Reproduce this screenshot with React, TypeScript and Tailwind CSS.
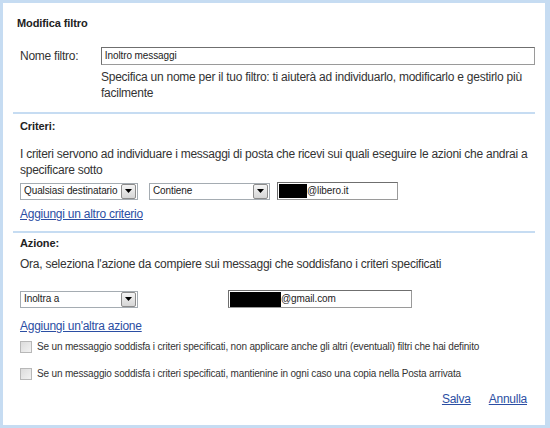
import React from "react";

function Select({ label, width }: { label: string; width: string }) {
  return (
    <div className={`${width} h-[17px] flex items-center border border-[#a5acb2] bg-white`}>
      <span className="flex-1 pl-[3px] text-[10px] tracking-[-0.1px] text-[#222] leading-none whitespace-nowrap overflow-hidden">{label}</span>
      <div className="w-[15px] h-[15px] mr-px border border-[#8c8c8c] rounded-[2px] bg-gradient-to-b from-[#f4f4f4] to-[#d6d6d6] flex items-center justify-center">
        <svg width="7" height="4" viewBox="0 0 7 4">
          <path d="M0 0h7L3.5 4z" fill="#000" />
        </svg>
      </div>
    </div>
  );
}

function TextBox({ width, children }: { width: string; children: React.ReactNode }) {
  return (
    <div
      className={`${width} h-[18px] flex items-center border border-[#9a9a9a] border-t-[#6f6f6f] border-l-[#6f6f6f] bg-white text-[10px] tracking-[-0.1px] text-[#222] leading-none`}
    >
      {children}
    </div>
  );
}

function Check({ label }: { label: string }) {
  return (
    <div className="flex items-center h-[16px]">
      <div className="w-[12px] h-[12px] border border-[#b8b8b8] bg-gradient-to-br from-[#dcdcdc] to-[#f2f2f2]" />
      <span className="ml-[5px] text-[10px] tracking-[-0.17px] text-[#333] whitespace-nowrap">{label}</span>
    </div>
  );
}

export default function App() {
  return (
    <div className="w-[550px] h-[428px] bg-[#c6dcf2] pl-[3px] pr-[5px] py-[3px] font-['Liberation_Sans',Arial,sans-serif]">
      <div className="h-full bg-white px-[10px] pt-[12px] text-[#333] text-[12px] tracking-[-0.25px] leading-[16px]">
        <h1 className="pl-[4px] text-[11px] font-bold text-[#222] tracking-[-0.1px] leading-[16px]">Modifica filtro</h1>

        <div className="pl-[7px]">
          <div className="mt-[16px] flex items-center">
            <span className="w-[81px]">Nome filtro:</span>
            <TextBox width="w-[435px]">
              <span className="pl-[3px]">Inoltro messaggi</span>
            </TextBox>
          </div>
          <p className="mt-[4px] pl-[81px] pr-[8px]">
            Specifica un nome per il tuo filtro: ti aiuterà ad individuarlo, modificarlo e gestirlo più facilmente
          </p>
        </div>

        <div className="mt-[11px] h-[2px] bg-[#c6dcf2]" />

        <div className="pl-[7px]">
          <h2 className="mt-[4px] text-[11px] font-bold text-[#222] tracking-[-0.1px]">Criteri:</h2>
          <p className="mt-[12px] pr-[6px]">
            I criteri servono ad individuare i messaggi di posta che ricevi sui quali eseguire le azioni che andrai a specificare sotto
          </p>
          <div className="mt-[4px] flex items-center">
            <Select label="Qualsiasi destinatario" width="w-[118px]" />
            <div className="ml-[11px]">
              <Select label="Contiene" width="w-[121px]" />
            </div>
            <div className="ml-[7px]">
              <TextBox width="w-[121px]">
                <span className="ml-px w-[28px] h-[14px] bg-black" />
                <span>@libero.it</span>
              </TextBox>
            </div>
          </div>
          <a href="#" className="mt-[6px] inline-block text-[#2b4ea3] underline">
            Aggiungi un altro criterio
          </a>
        </div>

        <div className="mt-[9px] h-[2px] bg-[#c6dcf2]" />

        <div className="pl-[7px]">
          <h2 className="mt-[2px] text-[11px] font-bold text-[#222] tracking-[-0.1px]">Azione:</h2>
          <p className="mt-[5px]">Ora, seleziona l'azione da compiere sui messaggi che soddisfano i criteri specificati</p>
          <div className="mt-[18px] flex items-center">
            <Select label="Inoltra a" width="w-[118px]" />
            <div className="ml-[90px]">
              <TextBox width="w-[184px]">
                <span className="ml-px w-[51px] h-[15px] bg-black" />
                <span>@gmail.com</span>
              </TextBox>
            </div>
          </div>
          <a href="#" className="mt-[10px] inline-block text-[#2b4ea3] underline">
            Aggiungi un'altra azione
          </a>
          <div className="mt-[5px]">
            <Check label="Se un messaggio soddisfa i criteri specificati, non applicare anche gli altri (eventuali) filtri che hai definito" />
          </div>
          <div className="mt-[11px]">
            <Check label="Se un messaggio soddisfa i criteri specificati, mantienine in ogni caso una copia nella Posta arrivata" />
          </div>
          <div className="mt-[9px] flex justify-end pr-[8px] gap-[18px]">
            <a href="#" className="text-[#2b4ea3] underline">Salva</a>
            <a href="#" className="text-[#2b4ea3] underline">Annulla</a>
          </div>
        </div>
      </div>
    </div>
  );
}
